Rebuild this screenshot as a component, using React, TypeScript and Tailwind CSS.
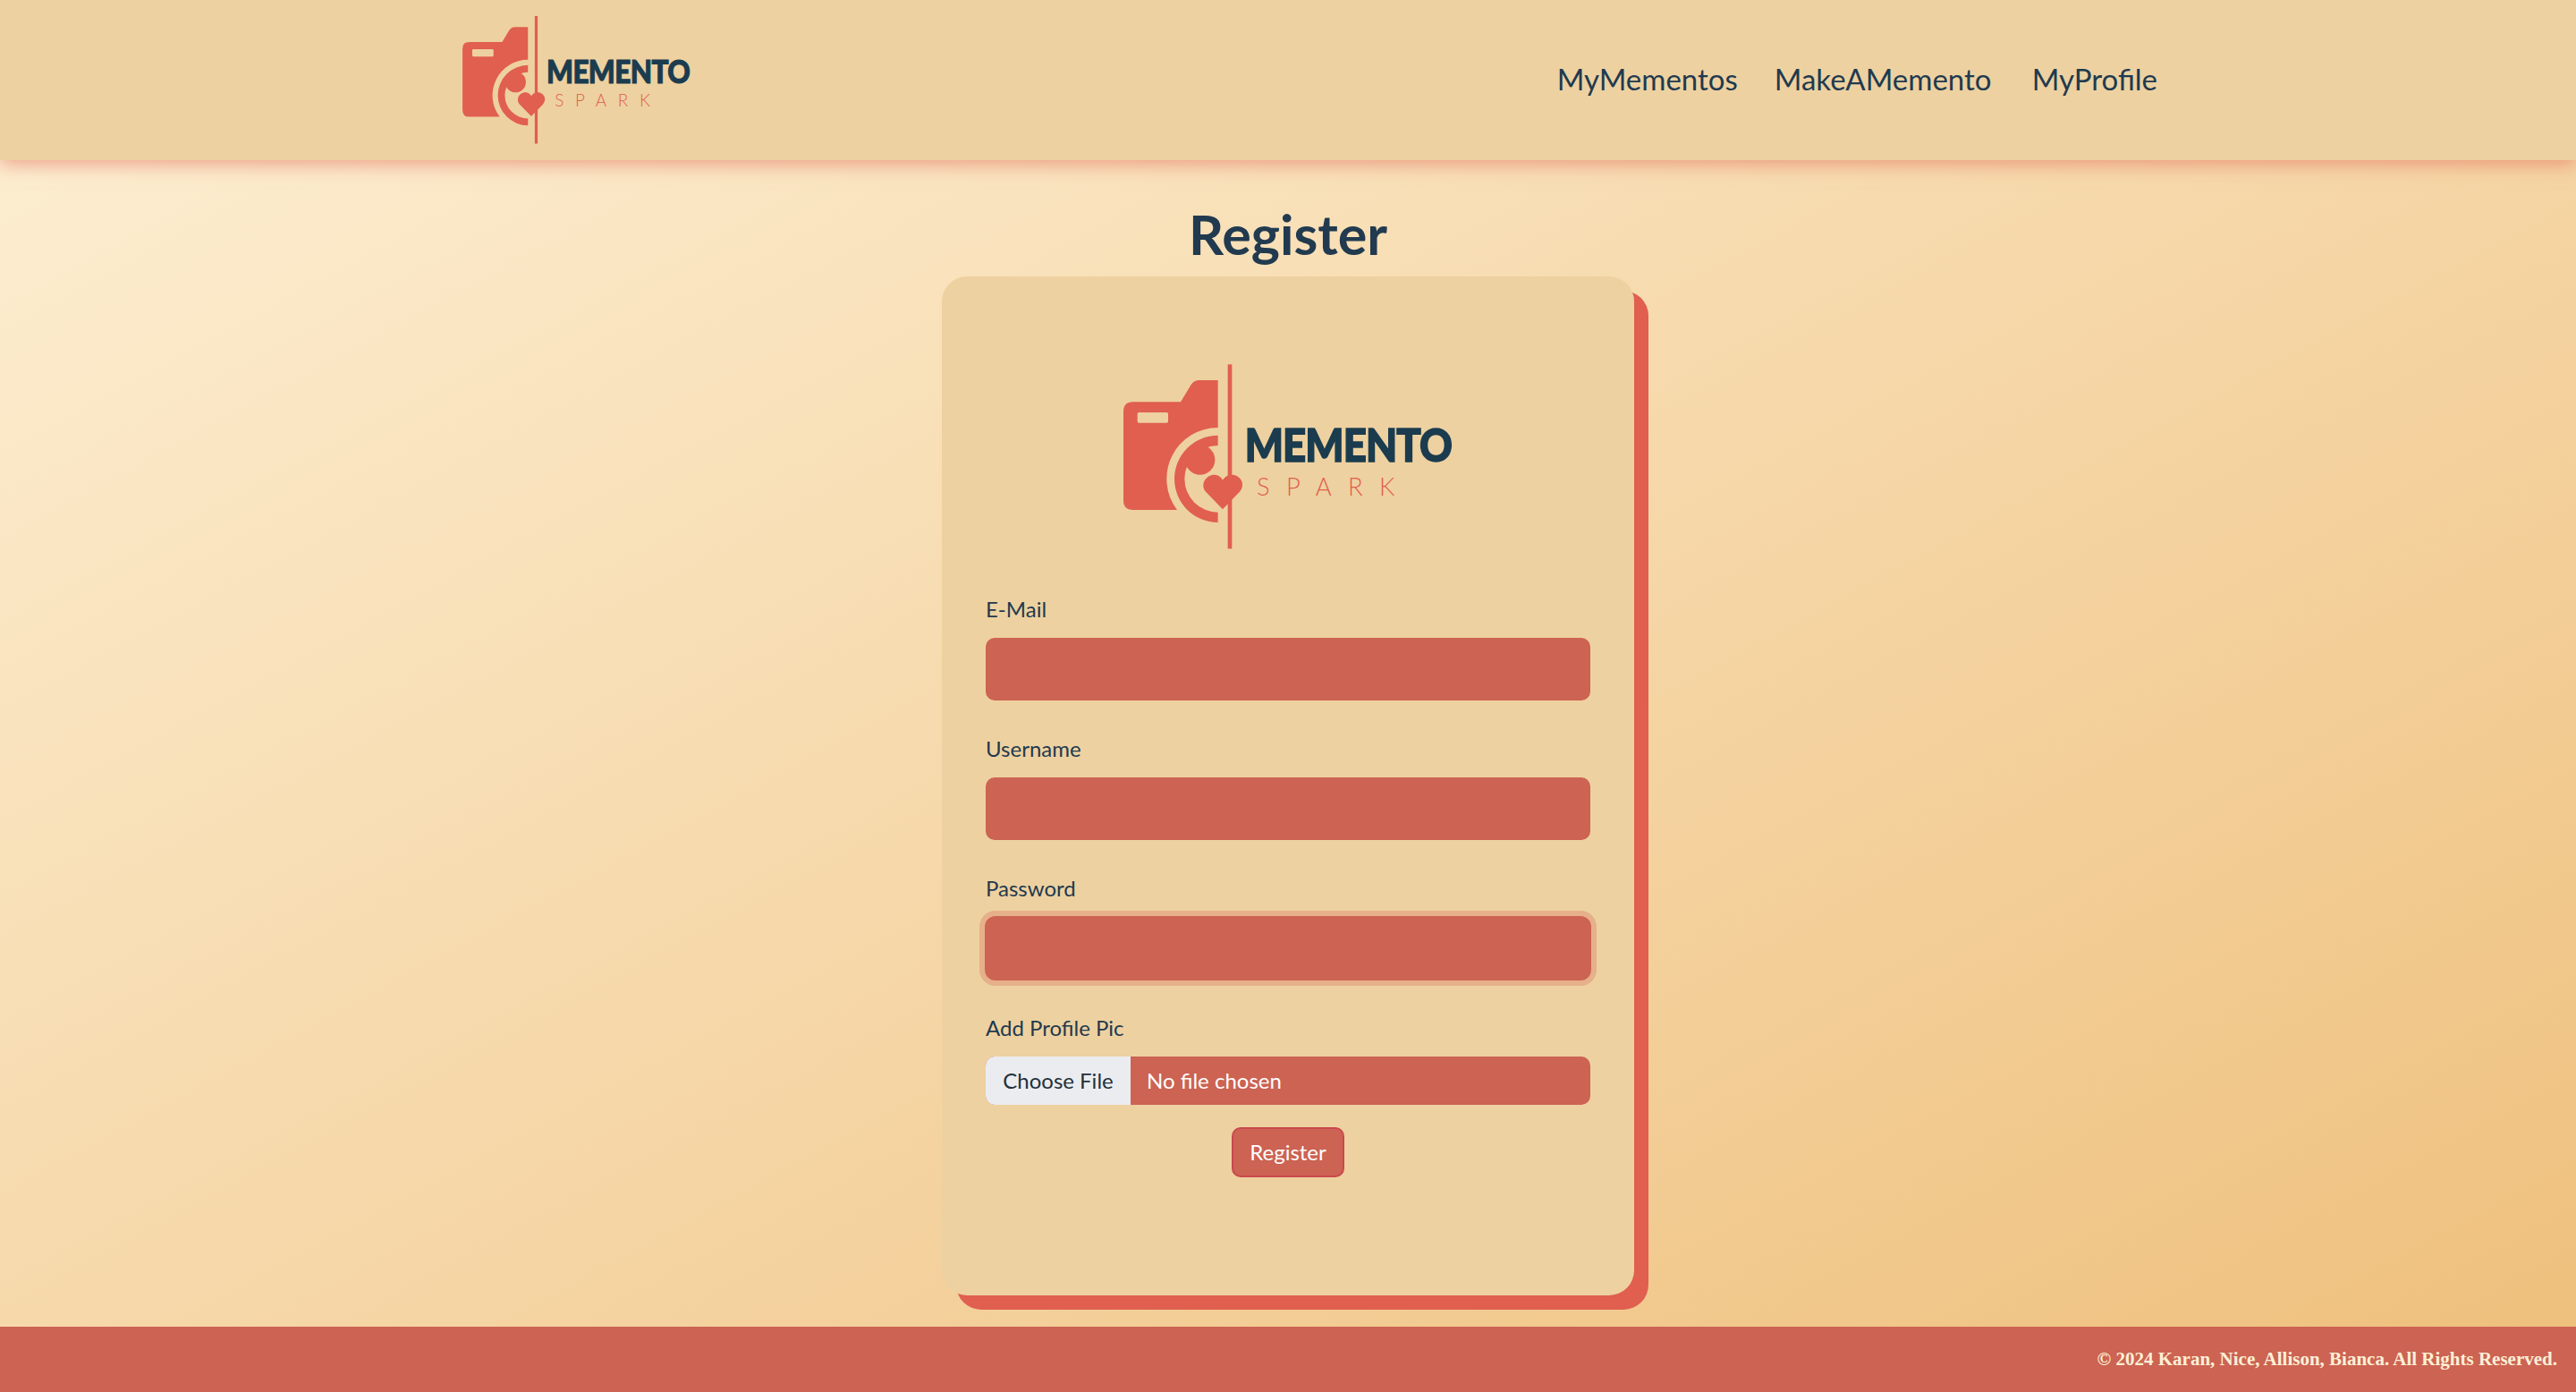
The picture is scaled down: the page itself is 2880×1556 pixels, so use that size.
function Logo({ className }: { className: string }) {
  return (
    <svg viewBox="0 0 1320 780" className={className}>
      <path
        fill="#e05f4f"
        d="M140 208H300L335 150Q345 135 362 135H425V294A172 172 0 0 0 288 570H140Q108 570 108 538V240Q108 208 140 208Z"
      />
      <rect x="155" y="243" width="103" height="35" rx="5" fill="#eed1a0" />
      <path fill="#e05f4f" d="M425 320A146 146 0 0 0 425 612V578A112 112 0 0 1 425 354Z" />
      <circle cx="365" cy="402" r="50" fill="#e05f4f" />
      <path
        fill="#e05f4f"
        d="M441 568L385 510C362 482 388 450 415 452C428 453 438 462 441 470C445 462 455 453 470 452C497 450 522 482 497 510Z"
      />
      <rect x="458" y="82" width="14" height="618" fill="#e05f4f" />
      <text
        transform="translate(515 408) scale(0.875 1)"
        fill="#1b3c4f"
        stroke="#1b3c4f"
        strokeWidth="5"
        fontSize="156"
        fontWeight="900"
        letterSpacing="-3"
        fontFamily="Lato, sans-serif"
      >
        MEMENTO
      </text>
      <text x="555" y="522" fill="#e05f4f" fontSize="82" fontWeight="300" letterSpacing="55" fontFamily="Lato, sans-serif">
        SPARK
      </text>
    </svg>
  );
}

function Field({ label, focused }: { label: string; focused?: boolean }) {
  return (
    <div className="mb-[38px]">
      <label className="block text-[24px] leading-[32px] mb-[16px] text-[#213a4f]">{label}</label>
      <input
        type="text"
        className={
          focused
            ? "block h-[72px] -my-px -mx-px w-[678px] rounded-[12px] bg-[#cc6353] outline-none ring-[6px] ring-[#e6b08a]"
            : "block w-full h-[70px] rounded-[10px] bg-[#cc6353] outline-none"
        }
      />
    </div>
  );
}

export default function App() {
  return (
    <div className="h-[1556px] flex flex-col font-['Lato',sans-serif] bg-linear-to-br from-[#fdf0d5] to-[#eebf7b]">
      <header className="h-[179px] shrink-0 flex items-center justify-between pl-[492px] pr-[468px] bg-[#eed1a0] shadow-[0_4px_20px_rgba(224,95,79,0.55)]">
        <Logo className="w-[305px] h-[180px] -mt-[2px]" />
        <nav className="flex gap-[46px] text-[33px] text-[#213a4f] -mt-[2px]">
          <a href="#" className="w-[197px] whitespace-nowrap">MyMementos</a>
          <a href="#" className="w-[242px] whitespace-nowrap">MakeAMemento</a>
          <a href="#" className="whitespace-nowrap">MyProfile</a>
        </nav>
      </header>

      <main className="flex-1 flex flex-col items-center">
        <h1 className="mt-[49px] mb-[13px] text-[61px] leading-[68px] font-bold text-[#213a4f]">Register</h1>
        <div className="w-[774px] h-[1139px] rounded-[28px] bg-[#eed1a0] shadow-[16px_16px_0_#e05f4f] px-[49px] pt-[71px]">
          <Logo className="block w-[440px] h-[260px] mx-auto mb-[25px]" />
          <Field label="E-Mail" />
          <Field label="Username" />
          <Field label="Password" focused />
          <label className="block text-[24px] leading-[32px] mb-[16px] text-[#213a4f]">Add Profile Pic</label>
          <input
            type="file"
            className="block w-full h-[54px] rounded-[10px] overflow-hidden bg-[#cc6353] text-[24px] leading-[54px] text-white file:h-[54px] file:w-[162px] file:mr-[18px] file:border-0 file:bg-[#ebecf0] file:text-[24px] file:text-[#23303a]"
          />
          <button className="block mx-auto mt-[25px] w-[126px] h-[56px] rounded-[10px] bg-[#cc6353] border-2 border-[#c9494d] text-[24px] text-white">
            Register
          </button>
        </div>
      </main>

      <footer className="h-[73px] shrink-0 flex items-center justify-end pr-[21px] bg-[#cc6353]">
        <p className="font-['Liberation_Serif',serif] font-bold text-[21px] text-[#fdf0d5]">
          © 2024 Karan, Nice, Allison, Bianca. All Rights Reserved.
        </p>
      </footer>
    </div>
  );
}
